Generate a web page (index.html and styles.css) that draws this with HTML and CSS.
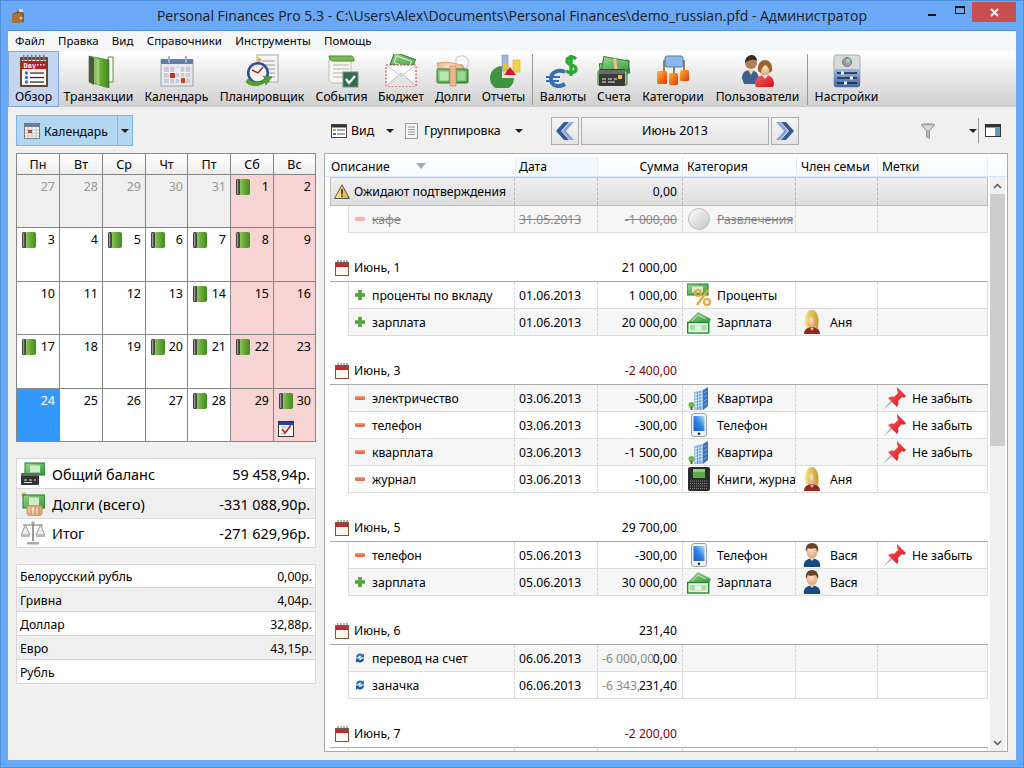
FILE: index.html
```html
<!DOCTYPE html>
<html lang="ru">
<head>
<meta charset="utf-8">
<title>Personal Finances Pro 5.3</title>
<link rel="stylesheet" href="styles.css">
</head>
<body>
<svg class="defs" aria-hidden="true">
<defs>
<linearGradient id="gGreen" x1="0" x2="1" y1="0" y2="0"><stop offset="0" stop-color="#b8dc96"/><stop offset=".5" stop-color="#6fb23c"/><stop offset="1" stop-color="#3f8a1e"/></linearGradient>
<linearGradient id="gMoney" x1="0" x2="1" y1="0" y2="1"><stop offset="0" stop-color="#9ed58b"/><stop offset="1" stop-color="#2f9a3d"/></linearGradient>
<linearGradient id="gBlue" x1="0" x2="0" y1="0" y2="1"><stop offset="0" stop-color="#9db7dd"/><stop offset="1" stop-color="#3f679f"/></linearGradient>
<linearGradient id="gRed" x1="0" x2="1" y1="0" y2="1"><stop offset="0" stop-color="#ff6060"/><stop offset="1" stop-color="#d01018"/></linearGradient>
<linearGradient id="gOrange" x1="0" x2="1" y1="0" y2="1"><stop offset="0" stop-color="#ffb52e"/><stop offset="1" stop-color="#e5350c"/></linearGradient>
<linearGradient id="gGrey" x1="0" x2="1" y1="0" y2="1"><stop offset="0" stop-color="#fff"/><stop offset="1" stop-color="#c4c4c4"/></linearGradient>
<radialGradient id="gSkin" cx=".45" cy=".35" r=".7"><stop offset="0" stop-color="#ffe3c8"/><stop offset="1" stop-color="#d99f72"/></radialGradient>
<linearGradient id="gGold" x1="0" x2="1" y1="0" y2="0"><stop offset="0" stop-color="#fff0a0"/><stop offset="1" stop-color="#d6a61e"/></linearGradient>
<linearGradient id="gSky" x1="0" x2="1" y1="1" y2="0"><stop offset="0" stop-color="#1e56c0"/><stop offset=".5" stop-color="#2d86e8"/><stop offset="1" stop-color="#b7dcf8"/></linearGradient>
<linearGradient id="gHair" x1="0" x2="1" y1="0" y2="0"><stop offset="0" stop-color="#f6e07a"/><stop offset="1" stop-color="#c79a2e"/></linearGradient>

<symbol id="i-app" viewBox="0 0 16 16"><path d="M2 6l8-4 2 2 2 1v9l-10 1-2-2z" fill="#8a5a2c"/><path d="M2 6l10-1v9l-10 1z" fill="#a9733a"/><rect x="9" y="1" width="4" height="3" fill="#c9d6e6"/><circle cx="11" cy="10" r="1.6" fill="#e3c27a"/></symbol>

<symbol id="t-day" viewBox="0 0 34 34"><rect x="3" y="3" width="28" height="30" rx="1" fill="#6d4427"/><rect x="5" y="6" width="24" height="25" fill="#fbfbf8"/><rect x="5" y="7" width="24" height="8" fill="#c8161c"/><g fill="#777"><rect x="6" y="1" width="1.5" height="6"/><rect x="10" y="1" width="1.5" height="6"/><rect x="14" y="1" width="1.5" height="6"/><rect x="18" y="1" width="1.5" height="6"/><rect x="22" y="1" width="1.5" height="6"/><rect x="26" y="1" width="1.5" height="6"/></g><text x="6.5" y="14" class="svg-day">Day</text><g fill="#fff"><rect x="20" y="10" width="1.5" height="1.5"/><rect x="23" y="10" width="1.5" height="1.5"/><rect x="26" y="10" width="1.5" height="1.5"/></g><g fill="#3c6fc4"><circle cx="9.5" cy="19" r="1.7"/><circle cx="9.5" cy="23.5" r="1.7"/><circle cx="9.5" cy="28" r="1.7"/></g><g fill="#333"><rect x="13" y="18.4" width="14" height="1.3"/><rect x="13" y="22.9" width="14" height="1.3"/><rect x="13" y="27.4" width="14" height="1.3"/></g></symbol>

<symbol id="t-book" viewBox="0 0 34 34"><path d="M26 3h5v25h-5z" fill="#fff" stroke="#5c8a3b"/><path d="M7 2l20 4v28L7 28z" fill="url(#gGreen)" stroke="#3b6f20" stroke-width=".6"/><path d="M7 2l5 2v27l-5-3z" fill="#4d5a3f"/><path d="M16 5v26" stroke="#cbe6ab" stroke-width="3" opacity=".5"/></symbol>

<symbol id="t-cal" viewBox="0 0 34 34"><rect x="1" y="6" width="32" height="26" fill="#e6e8ec" stroke="#9aa3b1"/><rect x="1" y="5" width="32" height="5" fill="#5f7dae"/><rect x="8" y="2" width="2" height="7" fill="#aab3c2"/><rect x="25" y="2" width="2" height="7" fill="#aab3c2"/><path d="M4 13h26v16H4z" fill="#c7ccd6"/><g stroke="#fff"><path d="M4 18.5h26M4 24h26M9.5 13v16M15 13v16M20 13v16M25 13v16"/></g><rect x="10" y="19" width="5" height="5" fill="#bb3322"/><rect x="21" y="24" width="4" height="5" fill="#c04a22"/><rect x="15.5" y="13.5" width="4" height="4.5" fill="#e9edf4"/></symbol>

<symbol id="t-plan" viewBox="0 0 34 34"><rect x="12" y="1" width="21" height="27" fill="#f4f4f2" stroke="#a5a5a5"/><path d="M17 7h13M17 11h13M17 15h13M17 19h13M17 23h13" stroke="#9a9a9a"/><path d="M13 3l4 3-4 3z" fill="#e8a23a"/><circle cx="13" cy="19" r="11" fill="#264f9c"/><circle cx="13" cy="19" r="8.5" fill="#f5f5f5"/><path d="M13 19l-6-3M13 19l5-6" stroke="#c21818" stroke-width="1.4"/><path d="M1 28c4 5 14 5 19 0l1 3 6-8-9-1 2 3c-4 3-12 4-17 0z" fill="#4ea52a" stroke="#2f7517" stroke-width=".5"/></symbol>

<symbol id="t-evt" viewBox="0 0 34 34"><path d="M4 6h22v23H7c-2 0-3-2-3-4z" fill="#f6f6f0" stroke="#bbb"/><path d="M4 2h22c2 0 3 2 3 5H8C6 7 4 5 4 2z" fill="#7cbb54" stroke="#4f8c2d"/><path d="M8 11h16M8 15h16M8 19h12M8 23h10" stroke="#b5b5a6"/><rect x="18" y="18" width="15" height="15" fill="#2d6e4d" stroke="#888"/><path d="M21 25l3 4 6-7" fill="none" stroke="#fff" stroke-width="2.2"/></symbol>

<symbol id="t-bud" viewBox="0 0 34 34"><g transform="rotate(20 17 10)"><rect x="7" y="1" width="22" height="13" fill="url(#gMoney)" stroke="#2c7a35"/><rect x="10" y="4" width="16" height="7" fill="none" stroke="#dff1d6"/></g><rect x="2" y="11" width="30" height="21" fill="#fbfbfb" stroke="#c33" stroke-dasharray="2 1.5"/><path d="M2 32l15-13 15 13" fill="#e2e4e8" stroke="#bbb"/><path d="M2 11l15 11 15-11" fill="none" stroke="#c8cbd2"/></symbol>

<symbol id="t-debt" viewBox="0 0 34 34"><path d="M20 4c3-3 10-3 12 1 1 3 0 7-2 9l-10-1z" fill="#f6f6f6" stroke="#c7c7c7"/><path d="M1 9c7-1 14-1 20 1l6 1 1 6-6 3-20-5z" fill="url(#gSkin)" stroke="#b8794d" stroke-width=".5"/><rect x="1" y="15" width="31" height="14" rx="1" fill="url(#gMoney)" stroke="#2c7a35"/><rect x="3" y="17" width="10" height="10" fill="#bfe3b0" stroke="#5aa84f" stroke-width=".6"/><rect x="21" y="17" width="9" height="10" fill="#a3d494" stroke="#5aa84f" stroke-width=".6"/><path d="M14 12h6v20h-6z" fill="#eeb391" stroke="#b8794d" stroke-width=".5"/></symbol>

<symbol id="t-rep" viewBox="0 0 34 34"><rect x="15" y="1" width="6" height="16" fill="#9db7e0" stroke="#6f8dbd" stroke-width=".5"/><rect x="26" y="6" width="7" height="12" fill="#f2d43b" stroke="#c9a91c" stroke-width=".5"/><path d="M15 12a12 12 0 1 0 12 12l-12 0z" fill="#3f9440"/><path d="M16 20V9c3 0 5 1 6 3z" fill="#f0c02c"/><path d="M17 21l6-8 6 8z" fill="#d5192c"/></symbol>

<symbol id="t-cur" viewBox="0 0 34 34"><path d="M30 5c-3-3-9-2-9 2 0 5 9 3 9 8 0 4-6 5-10 2M25 1v21" fill="none" stroke="#2fa82f" stroke-width="3.4"/><path d="M19 18c-7-3-14 0-14 7s8 9 14 5" fill="none" stroke="#3b6fb5" stroke-width="4"/><path d="M0 23h14M0 27h13" stroke="#3b6fb5" stroke-width="2.2"/></symbol>

<symbol id="t-acc" viewBox="0 0 34 34"><g transform="rotate(-8 17 14)"><rect x="3" y="8" width="29" height="13" fill="url(#gMoney)" stroke="#2c7a35"/></g><g transform="rotate(10 20 14)"><rect x="5" y="5" width="26" height="13" fill="url(#gMoney)" stroke="#2c7a35"/><path d="M16 5l4 13" stroke="#f0c08a" stroke-width="3"/></g><rect x="1" y="17" width="29" height="14" rx="1" fill="#9cd08a" stroke="#2c7a35"/><rect x="2" y="15" width="26" height="17" rx="1" fill="#3a3a3a"/><rect x="2" y="16" width="26" height="4" fill="#6b6b6b"/><path d="M5 25h4M11 25h4M17 25h3M5 28h4M11 28h7" stroke="#eee" stroke-width="1.2"/><rect x="21" y="21" width="4" height="4" fill="#f0c24a"/></symbol>

<symbol id="t-cat" viewBox="0 0 34 34"><path d="M10 7H8v11M26 7h2v11M18 13v6" fill="none" stroke="#7a5f3e" stroke-width="1.5"/><rect x="9" y="2" width="18" height="11" rx="2" fill="#8cb9ea" stroke="#4d7db8"/><rect x="1" y="17" width="10" height="13" rx="1.5" fill="url(#gOrange)"/><rect x="13" y="19" width="9" height="12" rx="1.5" fill="url(#gOrange)"/><rect x="24" y="16" width="9" height="11" rx="1.5" fill="url(#gOrange)"/></symbol>

<symbol id="t-usr" viewBox="0 0 34 34"><path d="M1 24c0-6 4-8 8-8s8 2 9 8l-3 6H3z" fill="#3f5f8f"/><path d="M7 16l3 5 3-5z" fill="#e5d9a0"/><circle cx="10" cy="9" r="6" fill="#b07f5a"/><path d="M4 9c0-6 4-8 7-8 3 0 5 3 5 6-3-2-8-2-12 2z" fill="#3a2a20"/><path d="M14 30c0-6 5-9 10-9s9 3 9 9l-1 3H15z" fill="url(#gRed)"/><path d="M21 21l3 4 3-4z" fill="#fff"/><circle cx="24" cy="15" r="6.2" fill="url(#gSkin)"/><path d="M17 17c-1-7 3-11 7-11s8 4 7 11l-3 2c1-4-1-7-4-8-2 2-4 4-4 8z" fill="#a0612f"/></symbol>

<symbol id="t-set" viewBox="0 0 34 34"><rect x="4" y="1" width="26" height="32" rx="2.5" fill="#d8dadb" stroke="#a8abad"/><rect x="4" y="15" width="26" height="18" rx="2" fill="url(#gBlue)"/><circle cx="17" cy="8" r="4.5" fill="#9aa0a3" stroke="#777"/><circle cx="18" cy="7" r="2" fill="#a4d9a0"/><g stroke="#16263f" stroke-width="1.4"><path d="M7 19h20M7 24h20M7 29h20"/></g><g fill="#e8eef7"><rect x="11" y="17.5" width="3" height="3"/><rect x="20" y="22.5" width="3" height="3"/><rect x="14" y="27.5" width="3" height="3"/></g></symbol>

<symbol id="i-book" viewBox="0 0 14 16"><rect width="14" height="16" rx="2" fill="url(#gGreen)"/><rect width="4" height="16" rx="1.500" fill="#444"/><rect x="1" y="1" width="1.200" height="14" fill="#999"/></symbol>
<symbol id="i-task" viewBox="0 0 16 16"><rect x=".5" y=".5" width="15" height="15" fill="#fff" stroke="#333"/><rect x="1" y="1" width="14" height="3" fill="#2440a0"/><path d="M4 8l3 4 6-8" fill="none" stroke="#d61f1f" stroke-width="1.800"/><path d="M3 6h6M3 13h4" stroke="#99a"/></symbol>
<symbol id="i-calbtn" viewBox="0 0 16 16"><rect x=".5" y=".5" width="15" height="15" fill="#fff" stroke="#777"/><rect x="1" y="1" width="14" height="3" fill="#6d7f96"/><path d="M1 7h14M1 10h14M1 13h14M4 4v11M8 4v11M12 4v11" stroke="#b8bcc4"/><rect x="4" y="7" width="4" height="3" fill="#c0452a"/></symbol>
<symbol id="i-view" viewBox="0 0 16 14"><rect x=".5" y=".5" width="15" height="13" fill="#fff" stroke="#444"/><rect x="1" y="1" width="14" height="2.500" fill="#333"/><rect x="2" y="5" width="3" height="2" fill="#e0a030"/><rect x="2" y="9" width="3" height="2" fill="#3b78c8"/><path d="M6 6h8M6 10h8" stroke="#556"/></symbol>
<symbol id="i-group" viewBox="0 0 13 16"><rect x=".5" y=".5" width="12" height="15" fill="#f5f5f5" stroke="#999"/><path d="M3 4h7M3 6.500h7M3 9h7M3 11.500h7" stroke="#999"/></symbol>
<symbol id="i-prev" viewBox="0 0 18 18"><path d="M14 0L6 9l8 9h4L10 9l8-9z" fill="#8aa6d6"/><path d="M8 0L0 9l8 9h5L5 9l8-9z" fill="#34589a"/></symbol>
<symbol id="i-next" viewBox="0 0 18 18"><path d="M4 0l8 9-8 9H0l8-9-8-9z" fill="#8aa6d6"/><path d="M10 0l8 9-8 9H5l8-9-8-9z" fill="#34589a"/></symbol>
<symbol id="i-filter" viewBox="0 0 14 16"><path d="M0 1.500C3 .5 11 .5 14 1.500L8.500 8v7.500l-3-1.500V8z" fill="#b4b4b4" stroke="#868686" stroke-width=".7"/><path d="M2 2.500h10L8 7H6z" fill="#dcdcdc"/></symbol>
<symbol id="i-panel" viewBox="0 0 16 13"><rect x=".5" y=".5" width="15" height="12" fill="#fff" stroke="#333"/><rect x="1" y="1" width="14" height="2.500" fill="#333"/><rect x="10" y="4" width="5" height="8" fill="#5aa0b8"/></symbol>

<symbol id="i-cal" viewBox="0 0 14 16"><rect x=".5" y="2.500" width="13" height="13" fill="#fbf8f1" stroke="#85532f"/><rect x="1" y="3" width="12" height="4" fill="#c8262a"/><path d="M3 0v5M6 0v5M9 0v5M12 0v5" stroke="#666"/></symbol>
<symbol id="i-warn" viewBox="0 0 16 16"><path d="M8 .8L15.500 14.500H.5z" fill="url(#gGold)" stroke="#555" stroke-linejoin="round"/><rect x="7.200" y="5" width="1.600" height="5.500" fill="#333"/><rect x="7.200" y="11.500" width="1.600" height="1.600" fill="#333"/></symbol>
<symbol id="i-plus" viewBox="0 0 10 10"><path d="M3.500 0h3v3.500H10v3H6.500V10h-3V6.500H0v-3h3.500z" fill="#55a83c" stroke="#2f7f22" stroke-width=".4"/></symbol>
<symbol id="i-minus" viewBox="0 0 10 10"><rect y="3" width="10" height="4" rx="1" fill="#ee6a4a"/><rect y="3" width="10" height="1.500" rx=".7" fill="#f59a82"/></symbol>
<symbol id="i-minusf" viewBox="0 0 10 10"><rect y="3" width="10" height="4" rx="1" fill="#f4b2a8"/></symbol>
<symbol id="i-swap" viewBox="0 0 10 10"><path d="M1 4.500C1 2 3 .5 5 .5c1 0 2 .4 2.600 1L9 .5v4H5l1.300-1.300C5.300 2.400 3.500 3 3 4.500z" fill="#2274c8"/><path d="M9 5.500C9 8 7 9.500 5 9.500c-1 0-2-.4-2.600-1L1 9.500v-4h4L3.700 6.800C4.700 7.600 6.500 7 7 5.500z" fill="#1459a8"/></symbol>

<symbol id="i-ball" viewBox="0 0 24 24"><circle cx="12" cy="12" r="10.500" fill="url(#gGrey)" stroke="#bdbdbd"/></symbol>
<symbol id="i-pct" viewBox="0 0 24 24"><rect x="0" y="1" width="21" height="11" fill="url(#gMoney)" stroke="#1e7a2c"/><rect x="5" y="3.500" width="11" height="6" fill="#d8f0cf"/><path d="M21 7L10 22" stroke="#e8a73a" stroke-width="2.600"/><circle cx="11" cy="10" r="3" fill="none" stroke="#e8a73a" stroke-width="2.200"/><circle cx="20" cy="19" r="3" fill="none" stroke="#e8a73a" stroke-width="2.200"/></symbol>
<symbol id="i-fan" viewBox="0 0 24 24"><path d="M1 12L11 2l13 7-2 4z" fill="url(#gMoney)"/><path d="M5 11l6-6 8 4" fill="none" stroke="#d6efcb" stroke-width=".8"/><rect x=".7" y="12.500" width="21" height="10.500" fill="#eaf6e4" stroke="#1f8a32" stroke-width="1.400"/><rect x="3" y="15" width="16.500" height="5.500" fill="#a9dca0"/><rect x="8" y="15.500" width="6.500" height="4.500" fill="#e6f5df"/></symbol>
<symbol id="i-flat" viewBox="0 0 24 24"><path d="M7 6l9-2v20H7z" fill="#9cc3ec"/><path d="M16 4l5-3v19l-5 4z" fill="#3f73b8"/><g stroke="#f2f8ff" stroke-width="1.200"><path d="M8 9l7-2M8 12l7-2M8 15l7-2M8 18l7-2M8 21l7-2"/></g><path d="M10.500 6v18M13 5v19" stroke="#5f8fc8" stroke-width=".8"/><g stroke="#7ea6d8" stroke-width="1"><path d="M17 7l3-2M17 11l3-2M17 15l3-2M17 19l3-2"/></g><circle cx="4.500" cy="19" r="3" fill="#6cb646"/><rect x="3.500" y="21" width="2" height="3" fill="#6d4b2a"/></symbol>
<symbol id="i-phone" viewBox="0 0 24 24"><rect x="4.500" y=".5" width="15" height="23" rx="2.500" fill="#f0f2f4" stroke="#9aa0a8"/><rect x="6.500" y="3" width="11" height="15" fill="url(#gSky)"/><circle cx="12" cy="20.800" r="1.200" fill="#222"/></symbol>
<symbol id="i-pda" viewBox="0 0 24 24"><rect x="1" y="0" width="22" height="24" rx="2" fill="#2c2c2c"/><rect x="6" y="2" width="12" height="9" fill="#5cad44"/><rect x="6" y="2" width="12" height="3" fill="#8ad06c"/><g stroke="#8a8a8a" stroke-dasharray="1 1"><path d="M3 14h18M3 16.500h18M3 19h18M3 21.500h18"/></g></symbol>
<symbol id="i-fem" viewBox="0 0 24 24"><path d="M4 24c0-4 3-7 8-7s8 3 8 7z" fill="#8e2a20"/><path d="M10 18l2 3 2-3z" fill="#e8b08a"/><path d="M6 17C4 8 6 0 12 0c5 0 8 8 6 18-1 1-2 0-3-1H9c-1 1-2 1-3 0z" fill="url(#gHair)"/><path d="M9 16c-1-4 0-8 2-10 3 2 4 6 3 10l-2 2z" fill="url(#gSkin)"/></symbol>
<symbol id="i-male" viewBox="0 0 24 24"><path d="M4 24c-1-5 2-8 8-9 6 1 9 4 8 9z" fill="#174a80"/><path d="M9.500 15l2.500 3 2.500-3z" fill="#f3e8c6"/><ellipse cx="12" cy="8.500" rx="5.500" ry="7" fill="url(#gSkin)"/><path d="M6 9C5 3 8 0 12 0c5 0 7 4 6 9-1-2-2-4-3-4-2 1-6 1-7 0-1 1-1 2-2 4z" fill="#6a4428"/></symbol>
<symbol id="i-pin" viewBox="0 0 24 24"><path d="M1 24l8-10 2 2z" fill="#b8bcc0"/><path d="M15 1l9 9-2 2-2-1-4 4c1 3 0 4-1 6l-9-9c2-1 4-2 6-1l4-4-1-3z" fill="url(#gRed)"/></symbol>

<symbol id="s-bal" viewBox="0 0 24 24"><rect x="4" y="1" width="20" height="12" fill="url(#gMoney)" stroke="#1e7a2c"/><rect x="9" y="3.500" width="10" height="7" fill="#d0eccb"/><rect x="0" y="11" width="18" height="12" rx="1" fill="#333"/><rect x="0" y="11" width="18" height="3" fill="#666"/><path d="M3 18h3M8 18h3M13 18h2M3 20.500h8" stroke="#ddd"/></symbol>
<symbol id="s-debt" viewBox="0 0 24 24"><circle cx="3" cy="3" r="2.500" fill="#e6a96a"/><rect x="2" y="3" width="22" height="13" fill="url(#gMoney)" stroke="#1e7a2c"/><rect x="8" y="5.500" width="10" height="8" fill="#d0eccb"/><path d="M6 14h15v7c0 2-2 3-4 3H10c-2 0-4-1-4-3z" fill="url(#gSkin)" stroke="#c98a5c"/><path d="M10 14v9M14 14v9M18 14v9" stroke="#c98a5c"/></symbol>
<symbol id="s-scale" viewBox="0 0 24 24"><path d="M11 3h2v17h-2z" fill="#999"/><circle cx="12" cy="2" r="1.800" fill="#aaa"/><path d="M2 4h20" stroke="#888" stroke-width="1.200"/><rect x="6" y="21" width="12" height="2.500" fill="#aaa"/><path d="M0 14L4.500 4 9 14z" fill="#eee" stroke="#999"/><path d="M15 14L19.500 4 24 14z" fill="#eee" stroke="#999"/><path d="M0 14h9v2H0zM15 14h9v2h-9z" fill="#bbb"/></symbol>
<symbol id="i-sort" viewBox="0 0 10 6"><path d="M0 0h10L5 6z" fill="#aaa"/></symbol>
<symbol id="i-up" viewBox="0 0 9 6"><path d="M1 5l3.500-3.500L8 5" fill="none" stroke="#555" stroke-width="1.500"/></symbol>
<symbol id="i-down" viewBox="0 0 9 6"><path d="M1 1l3.500 3.500L8 1" fill="none" stroke="#555" stroke-width="1.500"/></symbol>
</defs>
</svg>

<div class="window">
  <header class="titlebar">
    <svg class="app-icon"><use href="#i-app"/></svg>
    <div class="title">Personal Finances Pro 5.3 - C:\Users\Alex\Documents\Personal Finances\demo_russian.pfd - Администратор</div>
    <div class="winctl">
      <span class="wbtn"><i class="wmin"></i></span>
      <span class="wbtn"><i class="wmax"></i></span>
      <span class="wclose"><svg class="xicon" viewBox="0 0 9 9"><path d="M1 1l7 7M8 1L1 8" stroke="#fff" stroke-width="1.800"/></svg></span>
    </div>
  </header>

  <nav class="menubar">
    <span>Файл</span><span>Правка</span><span>Вид</span><span>Справочники</span><span>Инструменты</span><span>Помощь</span>
  </nav>

  <div class="toolbar">
    <div class="tool active"><svg class="ticon"><use href="#t-day"/></svg><span>Обзор</span></div>
    <div class="tool w79"><svg class="ticon"><use href="#t-book"/></svg><span>Транзакции</span></div>
    <div class="tool w77"><svg class="ticon"><use href="#t-cal"/></svg><span>Календарь</span></div>
    <div class="tool w94"><svg class="ticon"><use href="#t-plan"/></svg><span>Планировщик</span></div>
    <div class="tool w65"><svg class="ticon"><use href="#t-evt"/></svg><span>События</span></div>
    <div class="tool w54"><svg class="ticon"><use href="#t-bud"/></svg><span>Бюджет</span></div>
    <div class="tool w50"><svg class="ticon"><use href="#t-debt"/></svg><span>Долги</span></div>
    <div class="tool w51"><svg class="ticon"><use href="#t-rep"/></svg><span>Отчеты</span></div>
    <div class="tsep"></div>
    <div class="tool w60"><svg class="ticon"><use href="#t-cur"/></svg><span>Валюты</span></div>
    <div class="tool w42"><svg class="ticon"><use href="#t-acc"/></svg><span>Счета</span></div>
    <div class="tool w76"><svg class="ticon"><use href="#t-cat"/></svg><span>Категории</span></div>
    <div class="tool w93"><svg class="ticon"><use href="#t-usr"/></svg><span>Пользователи</span></div>
    <div class="tsep"></div>
    <div class="tool w77"><svg class="ticon"><use href="#t-set"/></svg><span>Настройки</span></div>
  </div>

  <main class="main">
    <aside class="left">
      <div class="calsplit">
        <div class="calbtn"><svg class="ic16"><use href="#i-calbtn"/></svg><span>Календарь</span></div>
        <div class="caldrop"><i class="arrow"></i></div>
      </div>

      <div class="calendar">
        <div class="dow">Пн</div><div class="dow">Вт</div><div class="dow">Ср</div><div class="dow">Чт</div><div class="dow">Пт</div><div class="dow">Сб</div><div class="dow">Вс</div>

        <div class="day prev"><b>27</b></div><div class="day prev"><b>28</b></div><div class="day prev"><b>29</b></div><div class="day prev"><b>30</b></div><div class="day prev"><b>31</b></div>
        <div class="day off"><svg class="bk"><use href="#i-book"/></svg><b>1</b></div><div class="day off"><b>2</b></div>

        <div class="day"><svg class="bk"><use href="#i-book"/></svg><b>3</b></div><div class="day"><b>4</b></div><div class="day"><svg class="bk"><use href="#i-book"/></svg><b>5</b></div><div class="day"><svg class="bk"><use href="#i-book"/></svg><b>6</b></div><div class="day"><svg class="bk"><use href="#i-book"/></svg><b>7</b></div>
        <div class="day off"><svg class="bk"><use href="#i-book"/></svg><b>8</b></div><div class="day off"><b>9</b></div>

        <div class="day"><b>10</b></div><div class="day"><b>11</b></div><div class="day"><b>12</b></div><div class="day"><b>13</b></div><div class="day"><svg class="bk"><use href="#i-book"/></svg><b>14</b></div>
        <div class="day off"><b>15</b></div><div class="day off"><b>16</b></div>

        <div class="day"><svg class="bk"><use href="#i-book"/></svg><b>17</b></div><div class="day"><b>18</b></div><div class="day"><b>19</b></div><div class="day"><svg class="bk"><use href="#i-book"/></svg><b>20</b></div><div class="day"><svg class="bk"><use href="#i-book"/></svg><b>21</b></div>
        <div class="day off"><svg class="bk"><use href="#i-book"/></svg><b>22</b></div><div class="day off"><b>23</b></div>

        <div class="day today"><b>24</b></div><div class="day"><b>25</b></div><div class="day"><b>26</b></div><div class="day"><b>27</b></div><div class="day"><svg class="bk"><use href="#i-book"/></svg><b>28</b></div>
        <div class="day off"><b>29</b></div><div class="day off"><svg class="bk"><use href="#i-book"/></svg><b>30</b><svg class="tk"><use href="#i-task"/></svg></div>
      </div>

      <div class="summary">
        <div class="sumrow"><svg class="sic"><use href="#s-bal"/></svg><span class="grow">Общий баланс</span><span>59 458,94р.</span></div>
        <div class="sumrow alt"><svg class="sic"><use href="#s-debt"/></svg><span class="grow">Долги (всего)</span><span>-331 088,90р.</span></div>
        <div class="sumrow"><svg class="sic"><use href="#s-scale"/></svg><span class="grow">Итог</span><span>-271 629,96р.</span></div>
      </div>

      <div class="rates">
        <div class="rate"><span class="grow">Белорусский рубль</span><span>0,00р.</span></div>
        <div class="rate alt"><span class="grow">Гривна</span><span>4,04р.</span></div>
        <div class="rate"><span class="grow">Доллар</span><span>32,88р.</span></div>
        <div class="rate alt"><span class="grow">Евро</span><span>43,15р.</span></div>
        <div class="rate"><span class="grow">Рубль</span></div>
      </div>
    </aside>

    <section class="right">
      <div class="subbar">
        <svg class="ic-view"><use href="#i-view"/></svg><span class="lbl-view">Вид</span><i class="arrow a-view"></i>
        <svg class="ic-group"><use href="#i-group"/></svg><span class="lbl-group">Группировка</span><i class="arrow a-group"></i>
        <div class="navbtn"><svg class="chev"><use href="#i-prev"/></svg></div>
        <div class="month">Июнь 2013</div>
        <div class="navbtn"><svg class="chev"><use href="#i-next"/></svg></div>
        <svg class="ic-filter"><use href="#i-filter"/></svg>
        <i class="arrow a-filter"></i>
        <div class="vsep"></div>
        <svg class="ic-panel"><use href="#i-panel"/></svg>
      </div>

      <div class="tablebox">
        <div class="thead">
          <div class="th th-desc"><span>Описание</span><svg class="sort"><use href="#i-sort"/></svg></div>
          <div class="th th-date">Дата</div>
          <div class="th th-sum">Сумма</div>
          <div class="th">Категория</div>
          <div class="th">Член семьи</div>
          <div class="th">Метки</div>
        </div>
        <div class="tbody">
          <div class="rows">
            <div class="pending">
              <div class="c c-desc"><svg class="ic-warn"><use href="#i-warn"/></svg>Ожидают подтверждения</div>
              <div class="c"></div><div class="c c-sum">0,00</div><div class="c"></div><div class="c"></div><div class="c"></div>
            </div>
            <div class="row alt void">
              <div class="c c-desc"><svg class="ic10"><use href="#i-minusf"/></svg><s>кафе</s></div>
              <div class="c"><s>31.05.2013</s></div><div class="c c-sum"><s>-1 000,00</s></div>
              <div class="c"><svg class="ic24"><use href="#i-ball"/></svg><s>Развлечения</s></div><div class="c"></div><div class="c"></div>
            </div>

            <div class="ghead"><div class="c c-g"><svg class="ic-cal"><use href="#i-cal"/></svg>Июнь, 1</div><div class="c"></div><div class="c c-sum">21 000,00</div></div>
            <div class="row">
              <div class="c c-desc"><svg class="ic10"><use href="#i-plus"/></svg>проценты по вкладу</div>
              <div class="c">01.06.2013</div><div class="c c-sum">1 000,00</div>
              <div class="c"><svg class="ic24"><use href="#i-pct"/></svg>Проценты</div><div class="c"></div><div class="c"></div>
            </div>
            <div class="row alt">
              <div class="c c-desc"><svg class="ic10"><use href="#i-plus"/></svg>зарплата</div>
              <div class="c">01.06.2013</div><div class="c c-sum">20 000,00</div>
              <div class="c"><svg class="ic24"><use href="#i-fan"/></svg>Зарплата</div><div class="c"><svg class="ic24"><use href="#i-fem"/></svg>Аня</div><div class="c"></div>
            </div>

            <div class="ghead"><div class="c c-g"><svg class="ic-cal"><use href="#i-cal"/></svg>Июнь, 3</div><div class="c"></div><div class="c c-sum neg">-2 400,00</div></div>
            <div class="row alt">
              <div class="c c-desc"><svg class="ic10"><use href="#i-minus"/></svg>электричество</div>
              <div class="c">03.06.2013</div><div class="c c-sum">-500,00</div>
              <div class="c"><svg class="ic24"><use href="#i-flat"/></svg>Квартира</div><div class="c"></div><div class="c"><svg class="ic24"><use href="#i-pin"/></svg>Не забыть</div>
            </div>
            <div class="row">
              <div class="c c-desc"><svg class="ic10"><use href="#i-minus"/></svg>телефон</div>
              <div class="c">03.06.2013</div><div class="c c-sum">-300,00</div>
              <div class="c"><svg class="ic24"><use href="#i-phone"/></svg>Телефон</div><div class="c"></div><div class="c"><svg class="ic24"><use href="#i-pin"/></svg>Не забыть</div>
            </div>
            <div class="row alt">
              <div class="c c-desc"><svg class="ic10"><use href="#i-minus"/></svg>кварплата</div>
              <div class="c">03.06.2013</div><div class="c c-sum">-1 500,00</div>
              <div class="c"><svg class="ic24"><use href="#i-flat"/></svg>Квартира</div><div class="c"></div><div class="c"><svg class="ic24"><use href="#i-pin"/></svg>Не забыть</div>
            </div>
            <div class="row">
              <div class="c c-desc"><svg class="ic10"><use href="#i-minus"/></svg>журнал</div>
              <div class="c">03.06.2013</div><div class="c c-sum">-100,00</div>
              <div class="c c-cut"><svg class="ic24"><use href="#i-pda"/></svg><span class="clip">Книги, журналы</span></div><div class="c"><svg class="ic24"><use href="#i-fem"/></svg>Аня</div><div class="c"></div>
            </div>

            <div class="ghead"><div class="c c-g"><svg class="ic-cal"><use href="#i-cal"/></svg>Июнь, 5</div><div class="c"></div><div class="c c-sum">29 700,00</div></div>
            <div class="row">
              <div class="c c-desc"><svg class="ic10"><use href="#i-minus"/></svg>телефон</div>
              <div class="c">05.06.2013</div><div class="c c-sum">-300,00</div>
              <div class="c"><svg class="ic24"><use href="#i-phone"/></svg>Телефон</div><div class="c"><svg class="ic24"><use href="#i-male"/></svg>Вася</div><div class="c"><svg class="ic24"><use href="#i-pin"/></svg>Не забыть</div>
            </div>
            <div class="row alt">
              <div class="c c-desc"><svg class="ic10"><use href="#i-plus"/></svg>зарплата</div>
              <div class="c">05.06.2013</div><div class="c c-sum">30 000,00</div>
              <div class="c"><svg class="ic24"><use href="#i-fan"/></svg>Зарплата</div><div class="c"><svg class="ic24"><use href="#i-male"/></svg>Вася</div><div class="c"></div>
            </div>

            <div class="ghead"><div class="c c-g"><svg class="ic-cal"><use href="#i-cal"/></svg>Июнь, 6</div><div class="c"></div><div class="c c-sum">231,40</div></div>
            <div class="row alt">
              <div class="c c-desc"><svg class="ic10"><use href="#i-swap"/></svg>перевод на счет</div>
              <div class="c">06.06.2013</div><div class="c c-pair"><span class="ghost">-6 000,00</span><span>0,00</span></div>
              <div class="c"></div><div class="c"></div><div class="c"></div>
            </div>
            <div class="row">
              <div class="c c-desc"><svg class="ic10"><use href="#i-swap"/></svg>заначка</div>
              <div class="c">06.06.2013</div><div class="c c-pair"><span class="ghost">-6 343,00</span><span>231,40</span></div>
              <div class="c"></div><div class="c"></div><div class="c"></div>
            </div>

            <div class="ghead"><div class="c c-g"><svg class="ic-cal"><use href="#i-cal"/></svg>Июнь, 7</div><div class="c"></div><div class="c c-sum neg">-2 200,00</div></div>
            <div class="row">
              <div class="c c-desc"></div><div class="c"></div><div class="c"></div>
              <div class="c"><svg class="ic24"><use href="#i-fan"/></svg></div><div class="c"></div><div class="c"></div>
            </div>
          </div>
          <div class="scrollbar">
            <div class="sb-end"><svg class="sb-arrow"><use href="#i-up"/></svg></div>
            <div class="sb-thumb"></div>
            <div class="sb-track"></div>
            <div class="sb-end"><svg class="sb-arrow"><use href="#i-down"/></svg></div>
          </div>
        </div>
      </div>
    </section>
  </main>
</div>
</body>
</html>
```

FILE: styles.css
```css
* { box-sizing: border-box; }
html, body { margin: 0; padding: 0; }
body {
  width: 1024px;
  height: 768px;
  overflow: hidden;
  font-family: "Noto Sans", "Liberation Sans", sans-serif;
  font-size: 12.2px;
  color: #000;
  background: #69a9f5;
}
.defs { position: absolute; width: 0; height: 0; }
.svg-day { font: 700 7px "Liberation Mono", monospace; fill: #fff; }
.window { width: 1024px; height: 768px; display: flex; flex-direction: column; padding: 0 7px 7px; border: 1px solid #4f8fdc; }

/* title bar */
.titlebar { height: 29px; flex: none; display: flex; align-items: flex-start; }
.app-icon { width: 16px; height: 16px; margin: 7px 0 0 2px; flex: none; }
.title { flex: 1; min-width: 0; text-align: center; font-size: 14px; line-height: 30px; color: #1a1a1a; white-space: nowrap; padding-left: 80px; font-family: "Open Sans", "Noto Sans", sans-serif; }
.winctl { display: flex; flex: none; align-items: flex-start; }
.wbtn { width: 27px; height: 20px; display: flex; align-items: center; justify-content: center; }
.wmin { width: 8px; height: 2px; background: #111; margin-top: 7px; }
.wmax { width: 10px; height: 8px; border: 1px solid #111; border-top-width: 2px; margin: -3px 0 0 2px; }
.wclose { width: 44px; height: 20px; background: #c75050; display: flex; align-items: center; justify-content: center; margin-top: 1px; }
.xicon { width: 9px; height: 9px; }

/* menu */
.menubar { height: 20px; flex: none; background: #f5f6f7; display: flex; gap: 13.3px; padding-left: 7px; align-items: center; font-size: 11.500px; border-top: 1px solid #4f8fdc; }
.toolbar { height: 57px; flex: none; display: flex; align-items: stretch; background: linear-gradient(#fff, #f0f0f0 30%, #cfcfcf); border-top: 1px solid #fafafa; }
.tool { flex: none; display: flex; flex-direction: column; align-items: center; padding-top: 3px; white-space: nowrap; font-size: 12.2px; line-height: 17px; }
.tool.active { width: 51px; background: #c4d5ef; border: 1px solid #7ea7dd; padding: 2px 0 0; }
.w42 { width: 42px; }
.w50 { width: 50px; }
.w51 { width: 51px; }
.w54 { width: 54px; }
.w60 { width: 60px; }
.w65 { width: 65px; }
.w76 { width: 76px; }
.w77 { width: 77px; }
.w79 { width: 79px; }
.w93 { width: 93px; }
.w94 { width: 94px; }
.ticon { width: 34px; height: 34px; flex: none; }
.tsep { width: 1px; flex: none; background: #999; margin: 3px 0 2px 3px; }

/* main */
.main { flex: 1; min-height: 0; background: #f0f0f0; display: flex; gap: 8px; padding: 8px; }
.left { width: 300px; flex: none; display: flex; flex-direction: column; }
.right { flex: 1; min-width: 0; display: flex; flex-direction: column; }
.grow { flex: 1; }
.arrow { display: block; width: 0; height: 0; border: 4px solid transparent; border-top: 4px solid #222; border-bottom: 0; flex: none; }

.calsplit { display: flex; height: 31px; flex: none; }
.calbtn { width: 102px; display: flex; align-items: center; gap: 4px; padding-left: 7px; padding-top: 1px; background: #b3d7f3; border: 1px solid #7eb4ea; white-space: nowrap; }
.caldrop { width: 15px; display: flex; align-items: center; justify-content: center; background: #b3d7f3; border: 1px solid #7eb4ea; border-left: 0; }
.ic16 { width: 16px; height: 16px; flex: none; }

.calendar {
  margin-top: 7px;
  flex: none;
  display: grid;
  grid-template-columns: 42px 42px 42px 41px 42px 42px 41px;
  grid-template-rows: 20px 52px 53px 52px 53px 52px;
  gap: 1px;
  padding: 1px;
  background: #868686;
  font-size: 12.500px;
}
.dow { display: flex; align-items: center; justify-content: center; background: linear-gradient(#fff, #ededed); }
.day { background: #fff; display: flex; flex-wrap: wrap; justify-content: space-between; align-content: flex-start; padding: 4px 4px 0 5px; }
.day b { font-weight: 400; margin-left: auto; line-height: 16px; }
.day.prev { background: #efefef; color: #999; }
.day.off { background: #f8d3d3; }
.day.today { background: #3399ff; color: #fff; }
.bk { width: 14px; height: 16px; flex: none; }
.tk { width: 16px; height: 16px; flex: none; margin: 12px 0 0 -1px; }

.summary { margin-top: 16px; flex: none; background: #fff; border: 1px solid #d8d8d8; font-size: 14.400px; }
.sumrow { height: 30px; display: flex; align-items: center; padding: 1px 5px 0 4px; border-bottom: 1px solid #d8d8d8; }
.sumrow:last-child { height: 28px; padding-top: 0; border-bottom: 0; }
.sumrow.alt, .rate.alt { background: #efefef; }
.sic { width: 24px; height: 24px; flex: none; margin-right: 7px; }

.rates { margin-top: 16px; flex: none; background: #fff; border: 1px solid #d8d8d8; }
.rate { height: 24px; display: flex; align-items: center; padding: 1px 3px 0; border-bottom: 1px solid #d8d8d8; }
.rate:first-child { height: 23px; padding-top: 0; }
.rate:last-child { height: 23px; border-bottom: 0; }

/* right toolbar */
.subbar { height: 31px; flex: none; display: flex; align-items: center; margin-bottom: 7px; padding-left: 7px; font-size: 12.300px; }
.ic-view { width: 16px; height: 14px; flex: none; }
.lbl-view { margin-left: 4px; width: 22px; }
.a-view { margin-left: 13px; }
.ic-group { width: 13px; height: 16px; margin-left: 11px; flex: none; }
.lbl-group { margin-left: 6px; width: 78px; white-space: nowrap; }
.a-group { margin-left: 13px; }
.navbtn { width: 28px; height: 28px; border: 1px solid #adadad; background: linear-gradient(#f5f5f5, #e4e4e4); display: flex; align-items: center; justify-content: center; flex: none; }
.a-group + .navbtn { margin-left: 28px; }
.month { width: 188px; height: 28px; margin: 0 2px; border: 1px solid #adadad; background: linear-gradient(#f5f5f5, #e4e4e4); display: flex; align-items: center; justify-content: center; flex: none; font-size: 12.500px; }
.chev { width: 18px; height: 18px; }
.ic-filter { width: 14px; height: 16px; margin-left: 122px; flex: none; }
.a-filter { margin-left: 34px; }
.vsep { width: 1px; height: 25px; background: #999; margin-left: 1px; flex: none; }
.ic-panel { width: 16px; height: 13px; margin-left: 6px; flex: none; }

/* table */
.tablebox { height: 599px; width: 684px; flex: none; background: #fff; border: 1px solid #a9a9a9; display: flex; flex-direction: column; overflow: hidden; }
.thead { height: 23px; flex: none; display: grid; grid-template-columns: 191px 82px 85px 114px 81px 110px; background: linear-gradient(#fff, #f7fbff); border-bottom: 1px solid #d9e6f5; padding-top: 2px; }
.th { display: flex; align-items: center; padding: 0 3px 0 4px; border-right: 1px solid #e3edf9; white-space: nowrap; }
.th-desc { padding-left: 6px; }
.th-desc span { width: 85px; }
.th-date { background: #f3f8fe; padding-left: 3px; }
.th-sum { justify-content: flex-end; }
.sort { width: 10px; height: 6px; }

.tbody { flex: 1; min-height: 0; display: flex; padding-left: 5px; }
.rows { width: 658px; flex: none; overflow: hidden; }
.c { display: flex; align-items: center; padding: 0 5px 0 4px; white-space: nowrap; overflow: hidden; min-width: 0; border-left: 1px dashed #d9d9d9; }
.c:first-child { border-left: 0; }
.c-sum { justify-content: flex-end; }
.pending { height: 29px; display: grid; grid-template-columns: 183px 83px 85px 113px 82px 110px; background: linear-gradient(#efefef, #dedede); border: 1px solid #bdbdbd; border-top-color: #ccc; }
.pending .c { border-left-color: #b5b5b5; }
.pending .c-desc { padding-left: 3px; gap: 4px; }
.ic-warn { width: 16px; height: 16px; flex: none; }
.row { height: 27px; margin-left: 18px; display: grid; grid-template-columns: 165px 83px 85px 113px 82px 110px; border: 1px solid #dcdcdc; border-top: 0; background: #fff; }
.row.alt { background: #f6f6f6; }
.row .c { gap: 6px; }
.row .c-desc { gap: 7px; padding-left: 6px; }
.row .c-cut { padding-right: 0; }
.void { color: #888; }
.ic10 { width: 10px; height: 10px; flex: none; }
.ic24 { width: 24px; height: 24px; flex: none; }
.clip { overflow: hidden; }
.ghead { height: 49px; display: grid; grid-template-columns: 184px 83px 85px; padding-top: 21px; border-bottom: 1px solid #aaa; }
.ghead .c { border-left: 0; }
.ghead .c-g { gap: 5px; padding-left: 5px; }
.ic-cal { width: 14px; height: 16px; flex: none; }
.neg { color: #8b0000; }
.row .c-pair { gap: 0; }
.ghost { flex: 1 1 0; min-width: 0; overflow: hidden; color: #888; }
.c-pair span:last-child { flex: none; }

.scrollbar { width: 15px; margin-left: 2px; flex: none; display: flex; flex-direction: column; background: #f0f0f0; }
.sb-end { height: 17px; flex: none; display: flex; align-items: center; justify-content: center; }
.sb-thumb { height: 252px; flex: none; background: #cdcdcd; }
.sb-track { flex: 1; }
.sb-arrow { width: 9px; height: 6px; }
```
